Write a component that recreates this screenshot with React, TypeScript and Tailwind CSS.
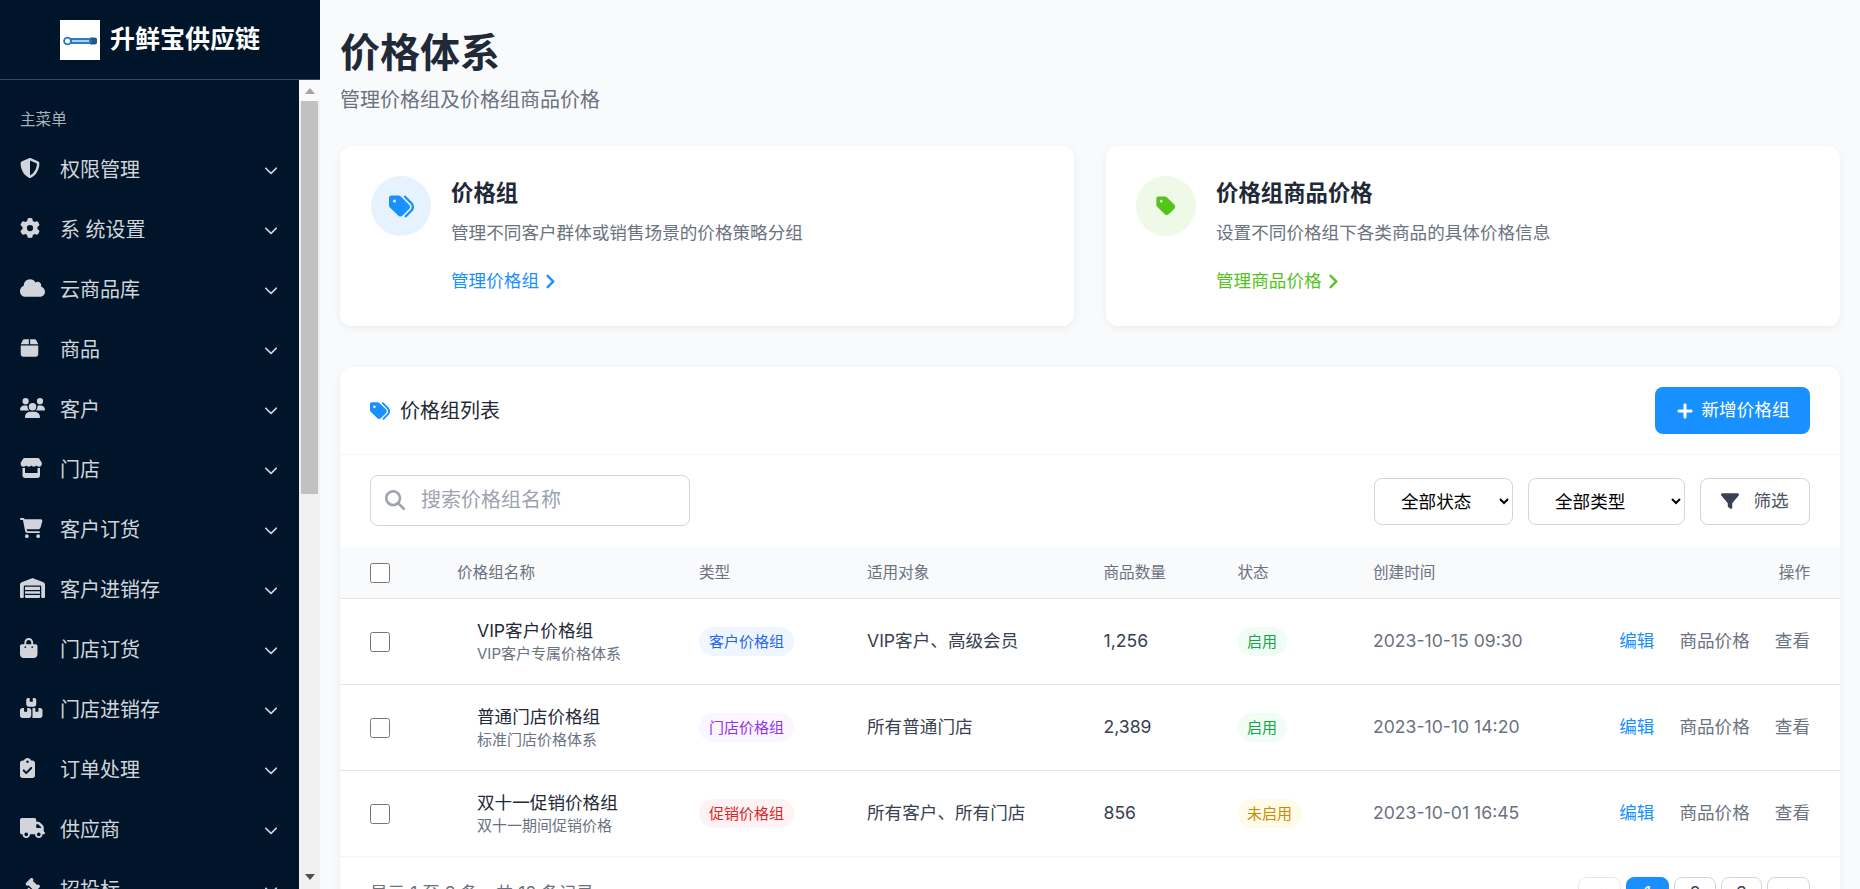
import React from "react";
import {
  FaShieldHalved, FaGear, FaCloud, FaBox, FaUsers, FaStore, FaCartShopping, FaWarehouse,
  FaBagShopping, FaBoxesStacked, FaClipboardCheck, FaTruck, FaGavel, FaChevronDown, FaChevronRight,
  FaChevronLeft, FaTags, FaTag, FaPlus, FaMagnifyingGlass, FaFilter,
} from "react-icons/fa6";

const menu: [React.ComponentType<{ className?: string }>, string, string][] = [
  [FaShieldHalved, "权限管理", "w-[20px]"],
  [FaGear, "系 统设置", "w-[20px]"],
  [FaCloud, "云商品库", "w-[25px]"],
  [FaBox, "商品", "w-[19px]"],
  [FaUsers, "客户", "w-[25px]"],
  [FaStore, "门店", "w-[22.5px]"],
  [FaCartShopping, "客户订货", "w-[22.5px]"],
  [FaWarehouse, "客户进销存", "w-[25px]"],
  [FaBagShopping, "门店订货", "w-[17.5px]"],
  [FaBoxesStacked, "门店进销存", "w-[22.5px]"],
  [FaClipboardCheck, "订单处理", "w-[15px]"],
  [FaTruck, "供应商", "w-[25px]"],
  [FaGavel, "招投标", "w-[20px]"],
];

const rows = [
  {
    name: "VIP客户价格组", sub: "VIP客户专属价格体系", type: "客户价格组", typeCls: "bg-[#eff6ff] text-[#2563eb]",
    target: "VIP客户、高级会员", count: "1,256", status: "启用", statusCls: "bg-[#f0fdf4] text-[#16a34a]", time: "2023-10-15 09:30",
  },
  {
    name: "普通门店价格组", sub: "标准门店价格体系", type: "门店价格组", typeCls: "bg-[#faf5ff] text-[#9333ea]",
    target: "所有普通门店", count: "2,389", status: "启用", statusCls: "bg-[#f0fdf4] text-[#16a34a]", time: "2023-10-10 14:20",
  },
  {
    name: "双十一促销价格组", sub: "双十一期间促销价格", type: "促销价格组", typeCls: "bg-[#fef2f2] text-[#dc2626]",
    target: "所有客户、所有门店", count: "856", status: "未启用", statusCls: "bg-[#fefce8] text-[#ca8a04]", time: "2023-10-01 16:45",
  },
];

const headers = ["价格组名称", "类型", "适用对象", "商品数量", "状态", "创建时间"];

function Logo() {
  return (
    <div className="w-10 h-10 bg-white shrink-0 flex items-center justify-center pt-[3px]">
      <svg width="34" height="10" viewBox="0 0 34 10">
        <rect x="1" y="2" width="31" height="6" rx="3" fill="#2c7cc4" />
        <circle cx="4.5" cy="5" r="3.4" fill="#ffffff" stroke="#1f78c8" strokeWidth="1.8" />
        <rect x="9" y="4" width="17" height="2" fill="#a9cfee" />
        <path d="M27 1.5 H31 A3.5 3.5 0 0 1 31 8.5 H27 L29 5 Z" fill="#27577f" />
      </svg>
    </div>
  );
}

function Scrollbar() {
  return (
    <div className="w-[21px] shrink-0 bg-[#f1f1f1] flex flex-col items-center">
      <div className="h-[21px] w-full bg-[#f9f9f9] flex items-center justify-center">
        <svg width="10" height="6" viewBox="0 0 10 6"><path d="M5 0 L10 6 L0 6 Z" fill="#a3a3a3" /></svg>
      </div>
      <div className="h-[393px] w-[17px] bg-[#c1c1c1]" />
      <div className="flex-1" />
      <div className="h-[21px] w-full flex items-center justify-center pb-[4px]">
        <svg width="10" height="6" viewBox="0 0 10 6"><path d="M0 0 L10 0 L5 6 Z" fill="#505050" /></svg>
      </div>
    </div>
  );
}

function Sidebar() {
  return (
    <aside className="w-[320px] shrink-0 h-full bg-[#001529] flex flex-col">
      <div className="h-[80px] shrink-0 flex items-center pl-[60px] gap-[10px] border-b border-[#3b4a5a]">
        <Logo />
        <span className="text-white text-[25px] font-bold leading-none">升鲜宝供应链</span>
      </div>
      <div className="flex-1 min-h-0 flex">
        <nav className="flex-1 overflow-hidden">
          <div className="h-[60px] flex items-end pl-[20px] pb-[9px] text-[15.6px] leading-[22px] text-[#aab1ba]">主菜单</div>
          {menu.map(([Icon, label, w]) => (
            <div key={label} className="h-[60px] flex items-center pl-[20px] pr-[21px] text-[#d1d5db]">
              <span className="w-[40px] shrink-0 -mt-[4px]">
                <Icon className={`h-[20px] ${w}`} />
              </span>
              <span className="flex-1 text-[20px] whitespace-pre">{label}</span>
              <FaChevronDown className="text-[14px] -mt-[1px]" />
            </div>
          ))}
        </nav>
        <Scrollbar />
      </div>
    </aside>
  );
}

function FeatureCard(props: {
  icon: React.ReactNode; circle: string; title: string; desc: string; link: string; linkCls: string; pad: string;
}) {
  return (
    <div className={`h-[180px] bg-white rounded-[12px] shadow-[0_2px_8px_rgba(0,0,0,0.06)] py-[30px] pr-[30px] flex gap-[20px] ${props.pad}`}>
      <div className={`w-[60px] h-[60px] rounded-full shrink-0 flex items-center justify-center ${props.circle}`}>
        {props.icon}
      </div>
      <div>
        <h3 className="text-[22.4px] leading-[34px] font-bold text-[#1f2937]">{props.title}</h3>
        <p className="mt-[9px] text-[17.6px] leading-[28px] text-[#6b7280]">{props.desc}</p>
        <a className={`mt-[20px] flex items-center gap-[3px] text-[17.6px] leading-[28px] ${props.linkCls}`}>
          {props.link}
          <FaChevronRight className="h-[15px] w-[15px] stroke-current stroke-[24]" />
        </a>
      </div>
    </div>
  );
}

function PageButton({ children, cls }: { children: React.ReactNode; cls: string }) {
  return (
    <button className={`h-[33px] rounded-t-[8px] border flex items-center justify-center text-[17.6px] ${cls}`}>
      {children}
    </button>
  );
}

export default function App() {
  return (
    <div className="h-screen w-full overflow-hidden flex bg-[#f9fafb] font-['Inter','Noto_Sans_CJK_SC',sans-serif]">
      <Sidebar />
      <main className="flex-1 min-w-0 h-full overflow-hidden px-[20px] pt-[22px]">
        <h1 className="text-[40px] leading-[62px] font-bold text-[#1f2937]">价格体系</h1>
        <p className="mt-[1px] text-[20px] leading-[30px] text-[#6b7280]">管理价格组及价格组商品价格</p>

        <div className="mt-[31px] grid grid-cols-2 gap-[32px]">
          <FeatureCard
            icon={<FaTags className="text-[#1890ff] text-[25px]" />}
            circle="bg-[#e6f3ff]"
            title="价格组"
            desc="管理不同客户群体或销售场景的价格策略分组"
            link="管理价格组"
            linkCls="text-[#1890ff]"
            pad="pl-[31px]"
          />
          <FeatureCard
            icon={<FaTag className="text-[#52c41a] text-[22px]" />}
            circle="bg-[#eef9e8]"
            title="价格组商品价格"
            desc="设置不同价格组下各类商品的具体价格信息"
            link="管理商品价格"
            linkCls="text-[#52c41a]"
            pad="pl-[30px]"
          />
        </div>

        <section className="mt-[41px] bg-white rounded-[12px] shadow-[0_2px_8px_rgba(0,0,0,0.06)]">
          <div className="h-[88px] px-[30px] flex items-center justify-between border-b border-[#f3f4f6]">
            <div className="flex items-center gap-[10px] text-[20px] text-[#1f2937]">
              <FaTags className="text-[#1890ff] text-[20px]" />
              价格组列表
            </div>
            <button className="w-[155px] h-[47px] rounded-[8px] bg-[#1890ff] text-white text-[17.6px] flex items-center justify-center gap-[8px]">
              <FaPlus className="text-[18px] stroke-current stroke-[20]" />
              新增价格组
            </button>
          </div>

          <div className="h-[92px] px-[30px] flex items-center justify-between">
            <div className="w-[320px] h-[51px] -mt-[2px] border border-[#d1d5db] rounded-[8px] flex items-center pl-[14px] gap-[16px]">
              <FaMagnifyingGlass className="text-[20px] text-[#9ca3af] shrink-0" />
              <input
                placeholder="搜索价格组名称"
                className="flex-1 min-w-0 text-[20px] outline-none placeholder:text-[#9ca3af]"
              />
            </div>
            <div className="flex items-center gap-[15px]">
              <select className="w-[139px] h-[47px] pl-[22px] border border-[#d1d5db] rounded-[8px] text-[17.6px] text-black bg-white">
                <option>全部状态</option>
              </select>
              <select className="w-[157px] h-[47px] pl-[22px] border border-[#d1d5db] rounded-[8px] text-[17.6px] text-black bg-white">
                <option>全部类型</option>
              </select>
              <button className="w-[110px] h-[47px] border border-[#d1d5db] rounded-[8px] flex items-center justify-center gap-[14px] text-[17.6px] text-[#4b5563]">
                <FaFilter className="text-[18px] text-[#374151]" />
                筛选
              </button>
            </div>
          </div>

          <table className="w-full table-fixed border-separate border-spacing-0">
            <colgroup>
              <col className="w-[117px]" />
              <col className="w-[242px]" />
              <col className="w-[168px]" />
              <col className="w-[236.5px]" />
              <col className="w-[134px]" />
              <col className="w-[135.5px]" />
              <col />
            </colgroup>
            <thead>
              <tr className="bg-[#f9fafb] text-[15.6px] text-[#6b7280]">
                <th className="h-[52px] pl-[30px] border-b border-[#e5e7eb] text-left font-normal">
                  <input type="checkbox" className="block w-5 h-5 m-0" />
                </th>
                {headers.map((h) => (
                  <th key={h} className="h-[52px] border-b border-[#e5e7eb] text-left font-normal">{h}</th>
                ))}
                <th className="h-[52px] pr-[30px] border-b border-[#e5e7eb] text-right font-normal">操作</th>
              </tr>
            </thead>
            <tbody className="text-[17.6px]">
              {rows.map((r, i) => {
                const line = i === rows.length - 1 ? "border-[#f3f4f6]" : "border-[#e5e7eb]";
                return (
                  <tr key={r.name}>
                    <td className={`h-[86px] pl-[30px] border-b ${line}`}>
                      <input type="checkbox" className="block w-5 h-5 m-0" />
                    </td>
                    <td className={`h-[86px] pl-[20px] border-b ${line}`}>
                      <div className="leading-[24px] text-[#1f2937]">{r.name}</div>
                      <div className="text-[15px] leading-[22px] text-[#6b7280]">{r.sub}</div>
                    </td>
                    <td className={`h-[86px] border-b ${line}`}>
                      <span className={`inline-block rounded-full px-[10px] text-[15px] leading-[29px] ${r.typeCls}`}>{r.type}</span>
                    </td>
                    <td className={`h-[86px] border-b text-[#374151] ${line}`}>{r.target}</td>
                    <td className={`h-[86px] border-b text-[#374151] ${line}`}>{r.count}</td>
                    <td className={`h-[86px] border-b ${line}`}>
                      <span className={`inline-block rounded-full px-[9.6px] text-[15px] leading-[29px] ${r.statusCls}`}>{r.status}</span>
                    </td>
                    <td className={`h-[86px] border-b text-[#6b7280] ${line}`}>{r.time}</td>
                    <td className={`h-[86px] pr-[30px] border-b text-right ${line}`}>
                      <span className="text-[#1890ff]">编辑</span>
                      <span className="ml-[25px] text-[#6b7280]">商品价格</span>
                      <span className="ml-[25px] text-[#6b7280]">查看</span>
                    </td>
                  </tr>
                );
              })}
            </tbody>
          </table>

          <div className="px-[30px] py-[20px] flex items-center justify-between">
            <span className="text-[17.6px] text-[#6b7280]">显示 1 至 3 条，共 12 条记录</span>
            <div className="flex gap-[5px]">
              <PageButton cls="w-[43px] border-[#e5e7eb] text-[#d1d5db]"><FaChevronLeft className="text-[12px]" /></PageButton>
              <PageButton cls="w-[43px] border-[#1890ff] bg-[#1890ff] text-white">1</PageButton>
              <PageButton cls="w-[42px] border-[#d1d5db] text-[#374151]">2</PageButton>
              <PageButton cls="w-[41px] border-[#d1d5db] text-[#374151]">3</PageButton>
              <PageButton cls="w-[43px] border-[#d1d5db] text-[#9ca3af]"><FaChevronRight className="text-[12px]" /></PageButton>
            </div>
          </div>
        </section>
      </main>
    </div>
  );
}
